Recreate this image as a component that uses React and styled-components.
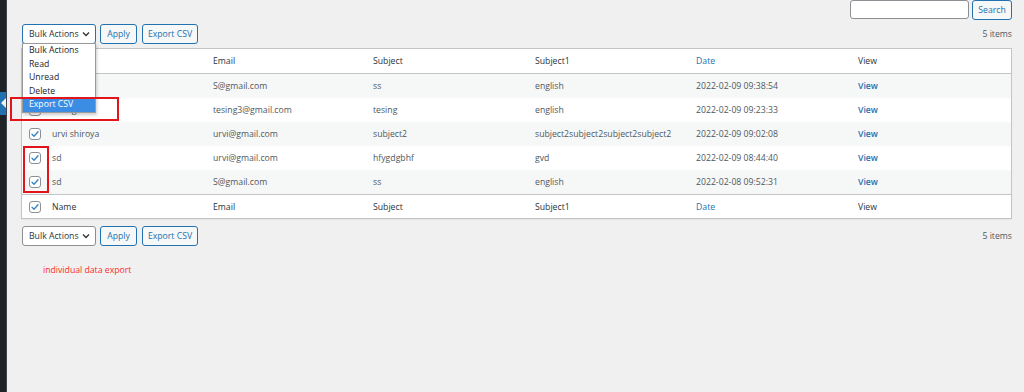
import React from 'react'
import styled, { createGlobalStyle } from 'styled-components'

const GlobalStyles = createGlobalStyle`
  html, body { margin: 0; padding: 0; background: #f0f0f1; }
  body { font-family: "Open Sans", "Noto Sans", sans-serif; font-size: 8.7px; color: #3c434a; }
  * { box-sizing: border-box; }
`

const rows = [
  { name: 'sd', email: 'S@gmail.com', subject: 'ss', subject1: 'english', date: '2022-02-09 09:38:54' },
  { name: 'tesing', email: 'tesing3@gmail.com', subject: 'tesing', subject1: 'english', date: '2022-02-09 09:23:33' },
  { name: 'urvi shiroya', email: 'urvi@gmail.com', subject: 'subject2', subject1: 'subject2subject2subject2subject2', date: '2022-02-09 09:02:08' },
  { name: 'sd', email: 'urvi@gmail.com', subject: 'hfygdgbhf', subject1: 'gvd', date: '2022-02-09 08:44:40' },
  { name: 'sd', email: 'S@gmail.com', subject: 'ss', subject1: 'english', date: '2022-02-08 09:52:31' },
]

const options = ['Bulk Actions', 'Read', 'Unread', 'Delete', 'Export CSV']

const Screen = styled.div`
  position: relative;
  display: flex;
  min-height: 392px;
`

const Sidebar = styled.div`
  position: relative;
  width: 7px;
  flex: none;
  background: #1d2327;
  border-right: 1px solid #3c434a;
`

const CurrentMark = styled.div`
  position: absolute;
  left: 0;
  top: 92px;
  width: 6px;
  height: 23px;
  background: #2271b1;
  &::after {
    content: '';
    position: absolute;
    right: 0;
    top: 6px;
    border-style: solid;
    border-width: 5px 5px 5px 0;
    border-color: transparent #f0f0f1 transparent transparent;
  }
`

const Content = styled.div`
  flex: 1;
  padding: 0 12px 0 14px;
`

const SearchBox = styled.div`
  display: flex;
  justify-content: flex-end;
  gap: 3px;
  height: 20px;
`

const SearchInput = styled.div`
  width: 119px;
  height: 19px;
  background: #fff;
  border: 1px solid #8c8f94;
  border-radius: 3px;
`

const Nav = styled.div`
  position: relative;
  display: flex;
  align-items: center;
  gap: 4px;
  height: 20px;
  margin-top: ${p => p.$top}px;
`

const SelectWrap = styled.div`
  position: relative;
  margin-left: 1px;
`

const Select = styled.div`
  display: flex;
  align-items: center;
  justify-content: space-between;
  width: 74px;
  height: 20px;
  padding: 0 5px 0 6px;
  background: #fff;
  border: 1px solid ${p => (p.$focus ? '#2271b1' : '#8c8f94')};
  border-radius: 3px;
  color: #2c3338;
  white-space: nowrap;
`

const Menu = styled.div`
  position: absolute;
  top: 19px;
  left: 0;
  width: 74px;
  background: #fff;
  border: 1px solid #9a9a9a;
  box-shadow: 1px 2px 3px rgba(0, 0, 0, 0.2);
  z-index: 5;
`

const Option = styled.div`
  height: 13.6px;
  line-height: 13.6px;
  padding-left: 6px;
  color: ${p => (p.$active ? '#fff' : '#1d2327')};
  background: ${p => (p.$active ? '#3b8de3' : 'transparent')};
  white-space: nowrap;
`

const Button = styled.div`
  display: flex;
  align-items: center;
  justify-content: center;
  width: ${p => p.$w}px;
  height: 20px;
  background: #f6f7f7;
  border: 1px solid #2271b1;
  border-radius: 3px;
  color: #2271b1;
  white-space: nowrap;
`

const Count = styled.div`
  margin-left: auto;
  color: #50575e;
`

const Table = styled.div`
  margin-top: 4px;
  background: #fff;
  border: 1px solid #c3c4c7;
  box-shadow: 0 1px 1px rgba(0, 0, 0, 0.04);
`

const Row = styled.div`
  display: grid;
  grid-template-columns: 30px 161px 160px 162px 161px 162px 1fr;
  align-items: center;
  height: ${p => (p.$line === 'top' ? 23 : 24)}px;
  background: ${p => (p.$striped ? '#f6f7f7' : '#fff')};
  color: ${p => (p.$head ? '#2c3338' : '#50575e')};
  border-bottom: ${p => (p.$line === 'bottom' ? '1px solid #c3c4c7' : 'none')};
  border-top: ${p => (p.$line === 'top' ? '1px solid #c3c4c7' : 'none')};
  box-sizing: content-box;
`

const Cell = styled.div`
  white-space: nowrap;
  overflow: hidden;
  color: ${p => (p.$link ? '#2271b1' : 'inherit')};
  font-weight: ${p => (p.$bold ? 600 : 400)};
`

const Check = styled.div`
  display: flex;
  align-items: center;
  justify-content: center;
  width: 12px;
  height: 12px;
  margin-left: 7px;
  background: #fff;
  border: 1px solid #8c8f94;
  border-radius: 3px;
`

const Note = styled.div`
  margin: 18px 0 0 22px;
  color: #ff2b2b;
`

const Annotation = styled.div`
  position: absolute;
  left: ${p => p.$x}px;
  top: ${p => p.$y}px;
  width: ${p => p.$w}px;
  height: ${p => p.$h}px;
  border: 2px solid #e4141b;
  z-index: 6;
`

function CheckBox() {
  return (
    <Check>
      <svg width="10" height="10" viewBox="0 0 20 20">
        <path d="M4 10.5l4 4 8-9" fill="none" stroke="#3582c4" strokeWidth="2.6" strokeLinecap="round" strokeLinejoin="round" />
      </svg>
    </Check>
  )
}

function Chevron() {
  return (
    <svg width="8" height="6" viewBox="0 0 8 6">
      <path d="M1 1.5l3 3 3-3" fill="none" stroke="#2c3338" strokeWidth="1.3" />
    </svg>
  )
}

function HeadRow({ line }) {
  return (
    <Row $head $line={line}>
      <CheckBox />
      <Cell>Name</Cell>
      <Cell>Email</Cell>
      <Cell>Subject</Cell>
      <Cell>Subject1</Cell>
      <Cell $link>Date</Cell>
      <Cell>View</Cell>
    </Row>
  )
}

function TableNav({ top, open }) {
  return (
    <Nav $top={top}>
      <SelectWrap>
        <Select $focus={open}>
          <span>Bulk Actions</span>
          <Chevron />
        </Select>
        {open && (
          <Menu>
            {options.map(o => (
              <Option key={o} $active={o === 'Export CSV'}>{o}</Option>
            ))}
          </Menu>
        )}
      </SelectWrap>
      <Button $w={37}>Apply</Button>
      <Button $w={56} style={{ marginLeft: 1 }}>Export CSV</Button>
      <Count>5 items</Count>
    </Nav>
  )
}

export default function App() {
  return (
    <Screen>
      <GlobalStyles />
      <Sidebar>
        <CurrentMark />
      </Sidebar>
      <Content>
        <SearchBox>
          <SearchInput />
          <Button $w={40}>Search</Button>
        </SearchBox>
        <TableNav top={4} open />
        <Table>
          <HeadRow line="bottom" />
          {rows.map((r, i) => (
            <Row key={i} $striped={i % 2 === 0}>
              <CheckBox />
              <Cell>{r.name}</Cell>
              <Cell>{r.email}</Cell>
              <Cell>{r.subject}</Cell>
              <Cell>{r.subject1}</Cell>
              <Cell>{r.date}</Cell>
              <Cell $link $bold>View</Cell>
            </Row>
          ))}
          <HeadRow line="top" />
        </Table>
        <TableNav top={7} />
        <Note>individual data export</Note>
      </Content>
      <Annotation $x={10} $y={97} $w={109} $h={24} />
      <Annotation $x={23} $y={146} $w={26} $h={47} />
    </Screen>
  )
}
